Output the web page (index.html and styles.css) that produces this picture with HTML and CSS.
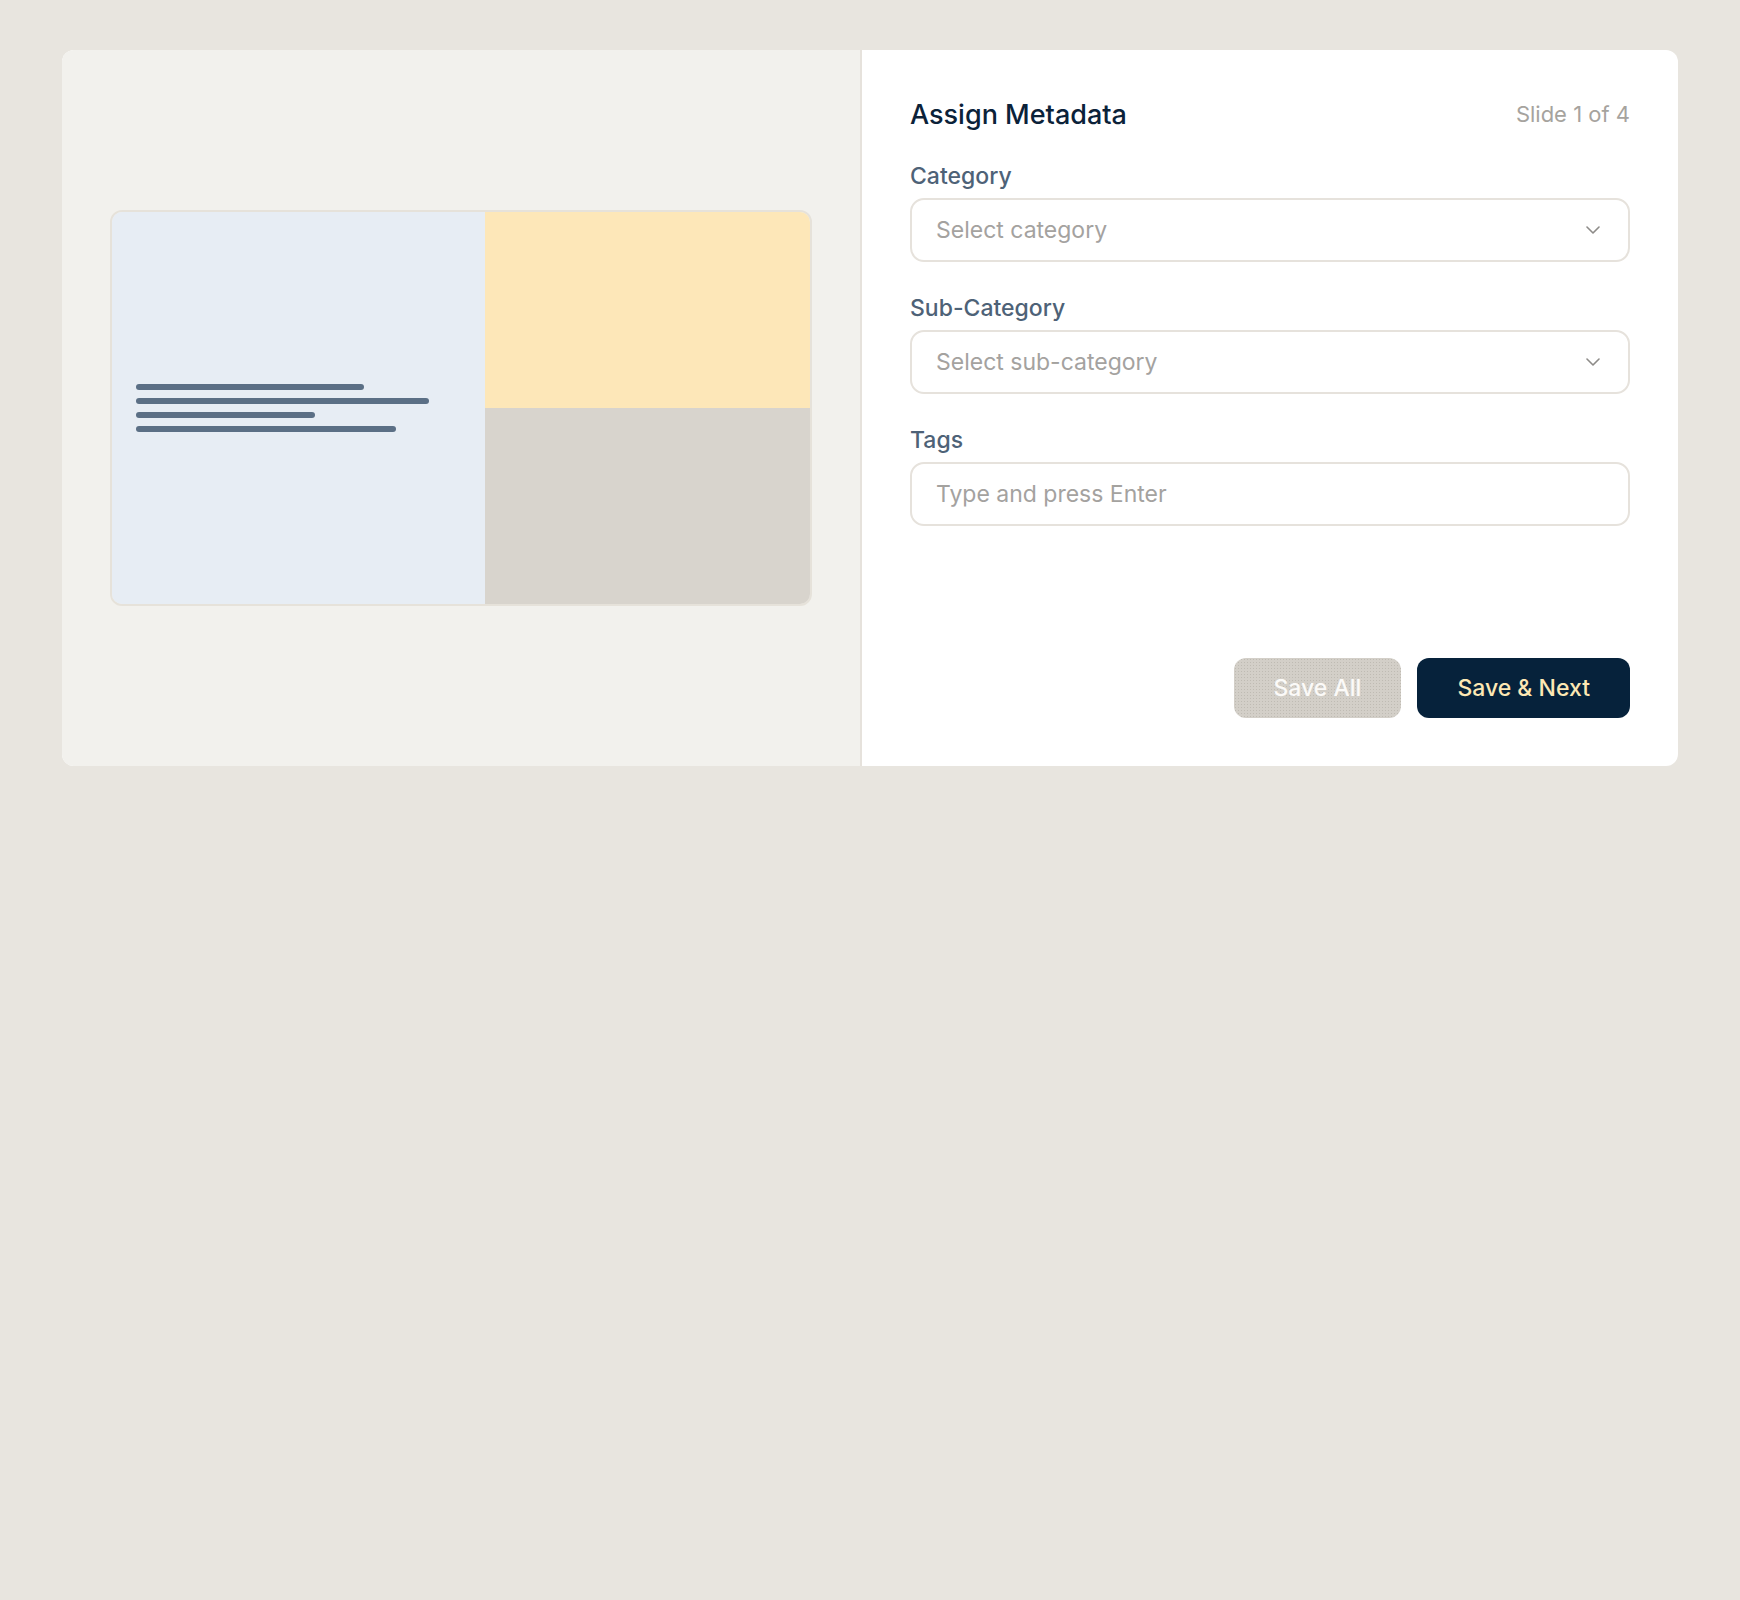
FILE: index.html
```html
<!DOCTYPE html>
<html lang="en">
<head>
  <meta charset="UTF-8" />
  <meta name="viewport" content="width=device-width, initial-scale=1.0"/>
  <title>Assign Metadata</title>
  <link rel="stylesheet" href="styles.css">
</head>
<body>

<div class="card">
  <section class="preview-pane">
    <div class="slide">
      <div class="slide-text">
        <span class="line" style="width: 70%"></span>
        <span class="line" style="width: 90%"></span>
        <span class="line" style="width: 55%"></span>
        <span class="line" style="width: 80%"></span>
      </div>
      <div class="slide-media">
        <div class="media-top"></div>
        <div class="media-bottom"></div>
      </div>
    </div>
  </section>

  <section class="meta-pane">
    <div class="meta-head">
      <h2>Assign Metadata</h2>
      <span class="slide-count">Slide 1 of 4</span>
    </div>

    <div class="fields">
      <div class="field">
        <label>Category</label>
        <div class="select">
          <span>Select category</span>
          <svg width="14" height="8" viewBox="0 0 14 8"><polyline points="1,1 7,7 13,1" fill="none" stroke="#8d8b88" stroke-width="1.6" stroke-linecap="round" stroke-linejoin="round"/></svg>
        </div>
      </div>
      <div class="field">
        <label>Sub-Category</label>
        <div class="select">
          <span>Select sub-category</span>
          <svg width="14" height="8" viewBox="0 0 14 8"><polyline points="1,1 7,7 13,1" fill="none" stroke="#8d8b88" stroke-width="1.6" stroke-linecap="round" stroke-linejoin="round"/></svg>
        </div>
      </div>
      <div class="field">
        <label>Tags</label>
        <input class="tags-input" type="text" placeholder="Type and press Enter">
      </div>
    </div>

    <div class="actions">
      <button class="btn btn-muted" disabled>Save All</button>
      <button class="btn btn-primary">Save &amp; Next</button>
    </div>
  </section>
</div>

</body>
</html>
```

FILE: styles.css
```css
body {
  margin: 0;
  padding: 50px 62px;
  font-family: 'Inter', sans-serif;
  background: #e8e5df;
  color: #0b2239;
}

.card {
  display: grid;
  grid-template-columns: 800px 1fr;
  background: #fff;
  border-radius: 12px;
  overflow: hidden;
}

/* left: slide preview */
.preview-pane {
  background: #f2f1ed;
  border-right: 2px solid #e6e2dc;
  padding: 48px;
  display: flex;
  align-items: center;
}

.slide {
  width: 100%;
  aspect-ratio: 16 / 9;
  border: 2px solid #e6e2da;
  border-radius: 12px;
  overflow: hidden;
  display: grid;
  grid-template-columns: 1.15fr 1fr;
}

.slide-text {
  background: #e7edf4;
  padding: 0 24px;
  display: flex;
  flex-direction: column;
  justify-content: center;
  gap: 8px;
}

.line {
  display: block;
  height: 6px;
  border-radius: 3px;
  background: #5b6f85;
}

.slide-media {
  display: grid;
  grid-template-rows: 1fr 1fr;
}

.media-top { background: #fde7b8; }
.media-bottom { background: #d8d4cd; }

/* right: metadata form */
.meta-pane {
  padding: 48px;
  display: flex;
  flex-direction: column;
}

.meta-head {
  display: flex;
  justify-content: space-between;
  align-items: center;
  height: 32px;
}

.meta-head h2 {
  margin: 0;
  font-size: 27px;
  font-weight: 500;
  color: #0b2239;
}

.slide-count {
  font-size: 22px;
  color: #a6a39e;
}

.fields {
  margin-top: 32px;
  display: flex;
  flex-direction: column;
  gap: 32px;
}

.field label {
  display: block;
  font-size: 23px;
  line-height: 28px;
  font-weight: 500;
  color: #4e6277;
  margin-bottom: 8px;
}

.select,
.tags-input {
  box-sizing: border-box;
  width: 100%;
  height: 64px;
  border: 2px solid #e6e2dc;
  border-radius: 14px;
  background: #fff;
  font-family: inherit;
  font-size: 23px;
  color: #a4a29f;
}

.select {
  display: flex;
  align-items: center;
  justify-content: space-between;
  padding: 0 28px 0 24px;
}

.tags-input {
  padding: 0 24px;
  outline: none;
}

.tags-input::placeholder {
  color: #a4a29f;
}

.actions {
  margin-top: 132px;
  display: flex;
  justify-content: flex-end;
  gap: 16px;
}

.btn {
  height: 60px;
  padding: 0 40px;
  border: none;
  border-radius: 12px;
  font-family: inherit;
  font-size: 23px;
  font-weight: 500;
  cursor: pointer;
}

.btn-muted {
  background-color: #d3cfc8;
  background-image: radial-gradient(#bfbbb3 0.7px, transparent 0.9px);
  background-size: 3px 3px;
  color: #fbfaf8;
  cursor: default;
}

.btn-primary {
  background: #06223b;
  color: #fde8b4;
}
```
